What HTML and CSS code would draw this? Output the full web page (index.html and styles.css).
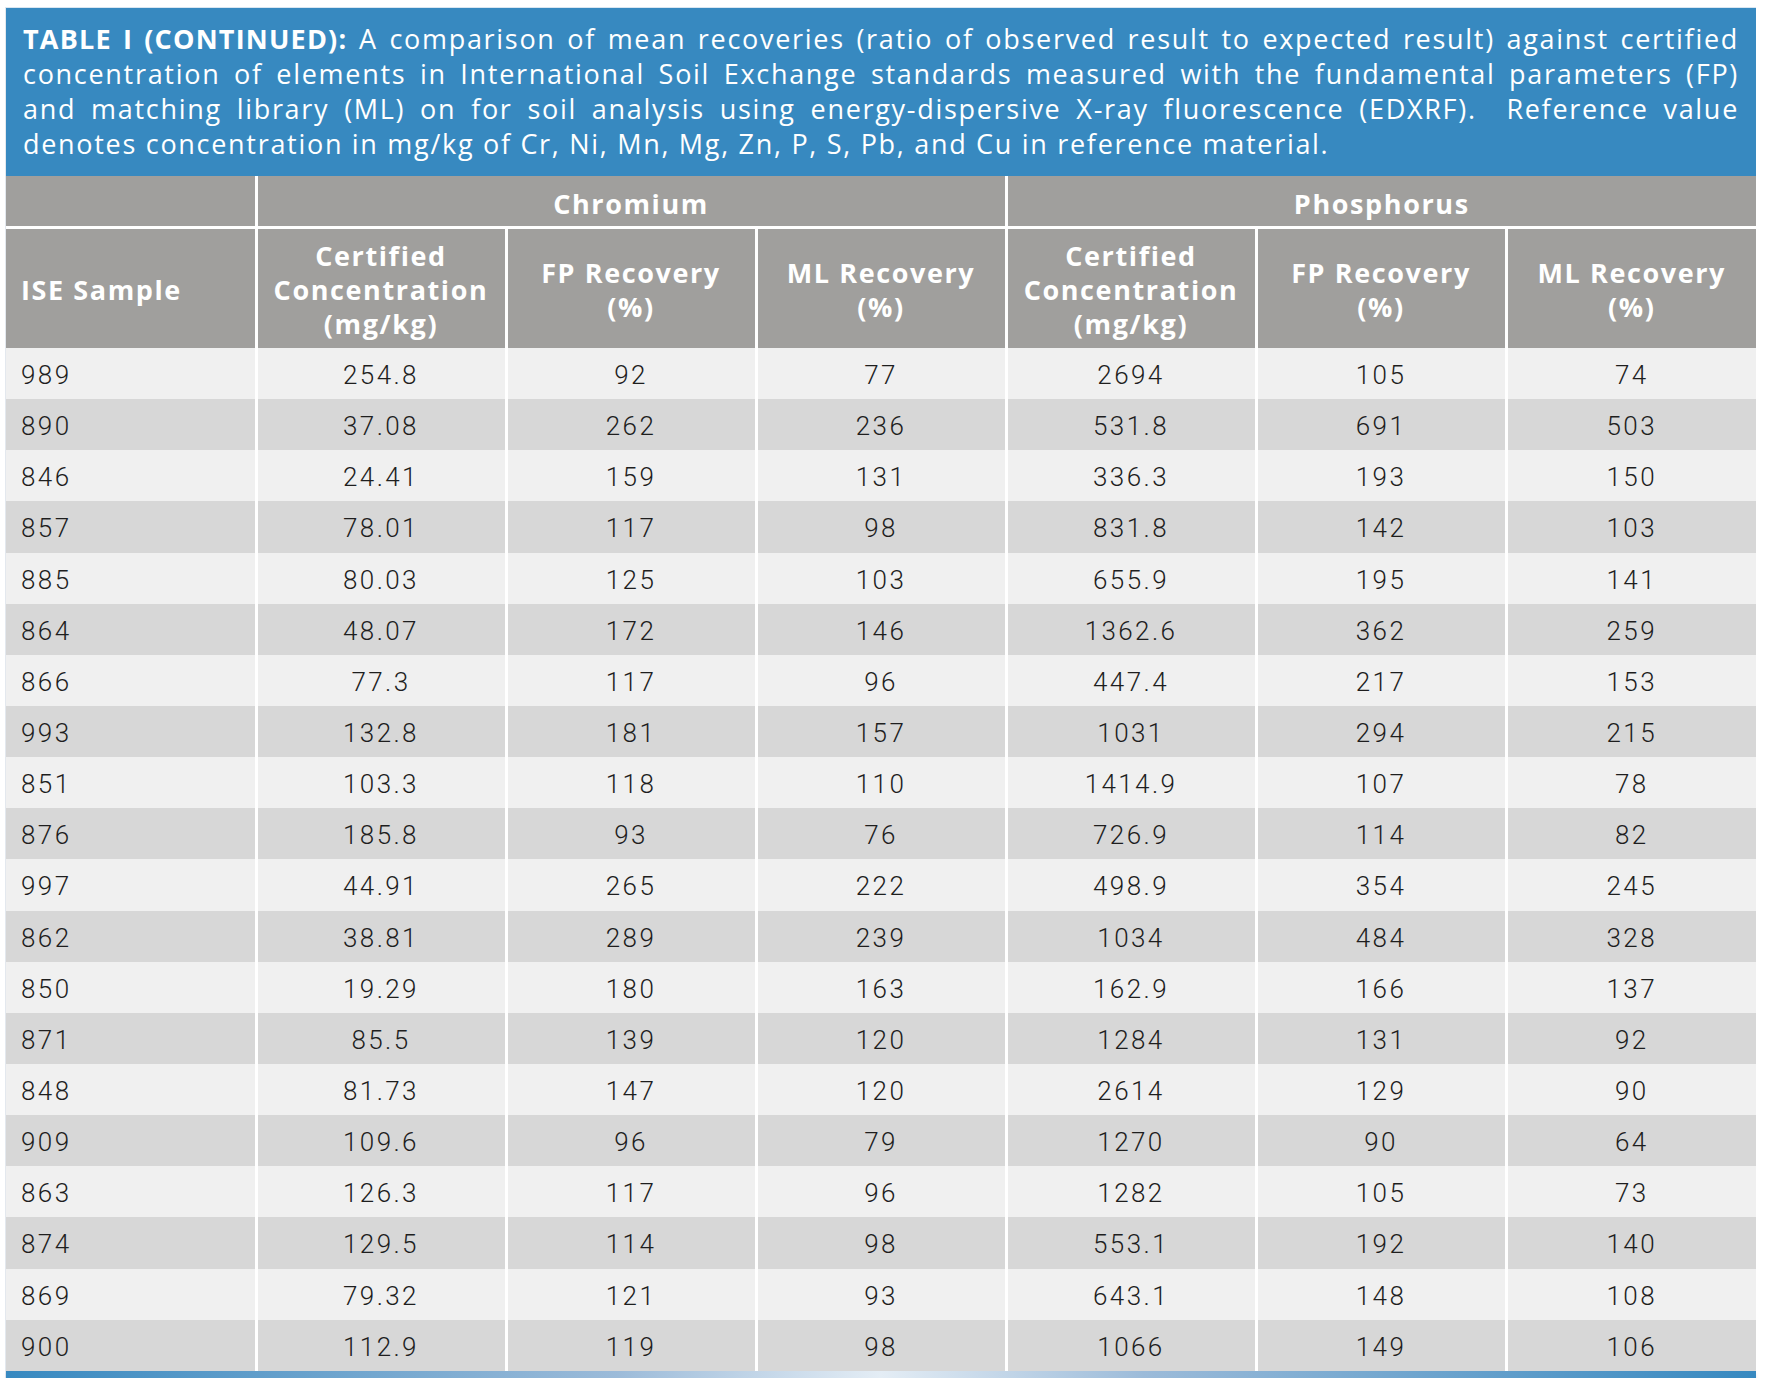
FILE: index.html
```html
<!DOCTYPE html>
<html>
<head>
<meta charset="utf-8">
<link rel="stylesheet" href="styles.css">
</head>
<body>
<div class="frame">
  <div class="caption">
    <span class="ln"><b>TABLE I (CONTINUED):</b> A comparison of mean recoveries (ratio of observed result to expected result) against certified</span>
    <span class="ln">concentration of elements in International Soil Exchange standards measured with the fundamental parameters (FP)</span>
    <span class="ln">and matching library (ML) on for soil analysis using energy-dispersive X-ray fluorescence (EDXRF).&nbsp; Reference value</span>
    <span class="ln last">denotes concentration in mg/kg of Cr, Ni, Mn, Mg, Zn, P, S, Pb, and Cu in reference material.</span>
  </div>
  <table class="data">
    <colgroup>
      <col><col><col><col><col><col><col>
    </colgroup>
    <thead>
      <tr class="group">
        <th></th>
        <th colspan="3">Chromium</th>
        <th colspan="3">Phosphorus</th>
      </tr>
      <tr class="sub">
        <th class="left">ISE Sample</th>
        <th>Certified<br>Concentration<br>(mg/kg)</th>
        <th>FP Recovery<br>(%)</th>
        <th>ML Recovery<br>(%)</th>
        <th>Certified<br>Concentration<br>(mg/kg)</th>
        <th>FP Recovery<br>(%)</th>
        <th>ML Recovery<br>(%)</th>
      </tr>
    </thead>
    <tbody>
      <tr><td>989</td><td>254.8</td><td>92</td><td>77</td><td>2694</td><td>105</td><td>74</td></tr>
      <tr><td>890</td><td>37.08</td><td>262</td><td>236</td><td>531.8</td><td>691</td><td>503</td></tr>
      <tr><td>846</td><td>24.41</td><td>159</td><td>131</td><td>336.3</td><td>193</td><td>150</td></tr>
      <tr><td>857</td><td>78.01</td><td>117</td><td>98</td><td>831.8</td><td>142</td><td>103</td></tr>
      <tr><td>885</td><td>80.03</td><td>125</td><td>103</td><td>655.9</td><td>195</td><td>141</td></tr>
      <tr><td>864</td><td>48.07</td><td>172</td><td>146</td><td>1362.6</td><td>362</td><td>259</td></tr>
      <tr><td>866</td><td>77.3</td><td>117</td><td>96</td><td>447.4</td><td>217</td><td>153</td></tr>
      <tr><td>993</td><td>132.8</td><td>181</td><td>157</td><td>1031</td><td>294</td><td>215</td></tr>
      <tr><td>851</td><td>103.3</td><td>118</td><td>110</td><td>1414.9</td><td>107</td><td>78</td></tr>
      <tr><td>876</td><td>185.8</td><td>93</td><td>76</td><td>726.9</td><td>114</td><td>82</td></tr>
      <tr><td>997</td><td>44.91</td><td>265</td><td>222</td><td>498.9</td><td>354</td><td>245</td></tr>
      <tr><td>862</td><td>38.81</td><td>289</td><td>239</td><td>1034</td><td>484</td><td>328</td></tr>
      <tr><td>850</td><td>19.29</td><td>180</td><td>163</td><td>162.9</td><td>166</td><td>137</td></tr>
      <tr><td>871</td><td>85.5</td><td>139</td><td>120</td><td>1284</td><td>131</td><td>92</td></tr>
      <tr><td>848</td><td>81.73</td><td>147</td><td>120</td><td>2614</td><td>129</td><td>90</td></tr>
      <tr><td>909</td><td>109.6</td><td>96</td><td>79</td><td>1270</td><td>90</td><td>64</td></tr>
      <tr><td>863</td><td>126.3</td><td>117</td><td>96</td><td>1282</td><td>105</td><td>73</td></tr>
      <tr><td>874</td><td>129.5</td><td>114</td><td>98</td><td>553.1</td><td>192</td><td>140</td></tr>
      <tr><td>869</td><td>79.32</td><td>121</td><td>93</td><td>643.1</td><td>148</td><td>108</td></tr>
      <tr><td>900</td><td>112.9</td><td>119</td><td>98</td><td>1066</td><td>149</td><td>106</td></tr>
    </tbody>
  </table>
  <div class="rule"></div>
</div>
</body>
</html>
```

FILE: styles.css
```css
html, body {
  margin: 0;
  padding: 0;
  background: #ffffff;
}

.frame {
  width: 1750px;
  margin: 7px 0 0 5px;
  font-family: "Open Sans", "Noto Sans", sans-serif;
  border-left: 1px solid #e3e8ee;
}

.caption {
  background: #3789c0;
  color: #ffffff;
  padding: 13px 17px 15px 17px;
  font-size: 27px;
  line-height: 35px;
  letter-spacing: 1.7px;
  border-top: 1px solid #d9e6f1;
}

.caption .ln {
  display: block;
  text-align: justify;
  text-align-last: justify;
  white-space: nowrap;
}

.caption .ln.last {
  text-align-last: left;
}

.caption b {
  font-weight: 700;
  letter-spacing: 1.2px;
}

.data {
  width: 1750px;
  border-collapse: collapse;
  table-layout: fixed;
}

.data col {
  width: 250px;
}

.data th {
  background: #a09f9d;
  color: #ffffff;
  font-weight: 700;
  font-size: 27px;
  letter-spacing: 1.6px;
  line-height: 34px;
  text-align: center;
  border-left: 3px solid #ffffff;
  border-right: 3px solid #ffffff;
  padding: 3px 4px 0 4px;
}

.data tr.group th {
  height: 44px;
  padding-top: 6px;
  border-bottom: 3px solid #ffffff;
}

.data tr.sub th {
  height: 116px;
}

.data th:first-child,
.data td:first-child {
  border-left: none;
}

.data th:last-child,
.data td:last-child {
  border-right: none;
}

.data th.left {
  text-align: left;
  padding-left: 15px;
}

.data td {
  height: 48.15px;
  padding: 3px 4px 0 4px;
  font-family: "Roboto", "Open Sans", sans-serif;
  font-size: 26px;
  font-weight: 300;
  letter-spacing: 2.4px;
  color: #1e1e1e;
  text-align: center;
  border-left: 3px solid #ffffff;
  border-right: 3px solid #ffffff;
}

.data td:first-child {
  text-align: left;
  padding-left: 15px;
}

.data tbody tr:nth-child(odd) td {
  background: #f0f0f0;
}

.data tbody tr:nth-child(even) td {
  background: #d7d7d7;
}

.rule {
  height: 7px;
  background: linear-gradient(to right, #3789c0 0%, #9cbbd9 35%, #e4edf5 50%, #9cbbd9 65%, #3789c0 100%);
  box-shadow: 0 3px 3px rgba(120, 150, 190, 0.25);
}
```
